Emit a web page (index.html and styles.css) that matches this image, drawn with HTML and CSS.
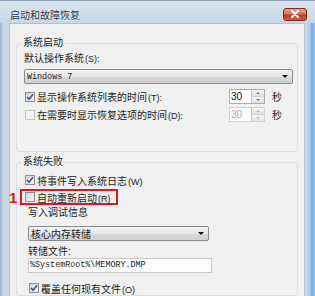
FILE: index.html
```html
<!DOCTYPE html>
<html lang="zh-CN">
<head>
  <meta charset="UTF-8">
  <meta name="viewport" content="width=device-width, initial-scale=1.0">
  <title>启动和故障恢复</title>
  <link rel="stylesheet" href="styles.css">
</head>
<body>
  <div class="window">
    <div class="titlebar">
      <span class="title">启动和故障恢复</span>
      <button class="close-btn">
        <svg width="10" height="8" viewBox="0 0 10 8">
          <path d="M2 1 L8 7 M8 1 L2 7" stroke="#fff" stroke-width="2" stroke-linecap="round"/>
        </svg>
      </button>
    </div>

    <div class="client">
      <fieldset class="group group-start">
        <legend>系统启动</legend>
        <div class="label">默认操作系统<span class="key">(S):</span></div>
        <div class="select">
          <span class="mono">Windows 7</span>
          <span class="arrow"></span>
        </div>
        <div class="row spin-row first">
          <span class="check">
            <svg width="8" height="8" viewBox="0 0 8 8"><path d="M1 4 L3 6.2 L7 1.2" fill="none" stroke="#3d5388" stroke-width="1.6"/></svg>
          </span>
          <span class="text">显示操作系统列表的时间<span class="key">(T):</span></span>
          <div class="spin">
            <span class="value">30</span>
            <span class="spin-btns"><i class="up"></i><i class="down"></i></span>
          </div>
          <span class="unit">秒</span>
        </div>
        <div class="row spin-row">
          <span class="check disabled"></span>
          <span class="text">在需要时显示恢复选项的时间<span class="key">(D):</span></span>
          <div class="spin disabled">
            <span class="value">30</span>
            <span class="spin-btns"><i class="up"></i><i class="down"></i></span>
          </div>
          <span class="unit">秒</span>
        </div>
      </fieldset>

      <fieldset class="group group-fail">
        <legend>系统失败</legend>
        <div class="row">
          <span class="check">
            <svg width="8" height="8" viewBox="0 0 8 8"><path d="M1 4 L3 6.2 L7 1.2" fill="none" stroke="#3d5388" stroke-width="1.6"/></svg>
          </span>
          <span class="text">将事件写入系统日志<span class="key">(W)</span></span>
        </div>
        <div class="row marked">
          <span class="mark-no">1</span>
          <span class="check"></span>
          <span class="text">自动重新启动<span class="key">(R)</span></span>
        </div>
        <div class="debug">
          <div class="label">写入调试信息</div>
          <div class="select short">
            <span>核心内存转储</span>
            <span class="arrow"></span>
          </div>
          <div class="label tight">转储文件:</div>
          <div class="textbox mono">%SystemRoot%\MEMORY.DMP</div>
          <div class="row overwrite">
            <span class="check">
              <svg width="8" height="8" viewBox="0 0 8 8"><path d="M1 4 L3 6.2 L7 1.2" fill="none" stroke="#3d5388" stroke-width="1.6"/></svg>
            </span>
            <span class="text">覆盖任何现有文件<span class="key">(O)</span></span>
          </div>
        </div>
      </fieldset>
    </div>
  </div>
</body>
</html>
```

FILE: styles.css
```css
body {
  margin: 0;
  width: 315px;
  height: 296px;
  overflow: hidden;
  font-family: "Liberation Sans", "Noto Sans CJK SC", sans-serif;
  font-size: 10px;
  color: #222;
}
/* Moldura da janela (estilo Aero) */
.window {
  height: 296px;
  display: flex;
  flex-direction: column;
  border-top: 1px solid #8a9db2;
  box-sizing: border-box;
  overflow: hidden;
  background: linear-gradient(to right, #9fb2c6 0, #c8d6e5 3px, #cdd9e6 calc(100% - 9px), #a9c8e8 calc(100% - 5px), #6faae6 calc(100% - 3px), #9cc4ee 100%);
}
.titlebar {
  height: 23px;
  display: flex;
  align-items: center;
  justify-content: space-between;
  padding: 4px 8px 0 10px;
  box-sizing: border-box;
  background: linear-gradient(#dbe5ef, #c8d6e5);
}
.title {
  font-size: 10px;
  color: #2a3646;
  text-shadow: 0 0 3px #fff;
}
.close-btn {
  width: 24px;
  height: 13px;
  padding: 0;
  border: 1px solid #7a2e24;
  border-radius: 3px;
  background: linear-gradient(#eba08f 0%, #d9715d 45%, #c23a25 55%, #d65a46 100%);
  display: flex;
  align-items: center;
  justify-content: center;
}
.client {
  flex: 1;
  margin: 0 10px 0 9px;
  padding: 12px 6px 0 6px;
  background: #f0f0f0;
  border: 1px solid #b4c2d0;
  border-bottom: none;
}
.group {
  margin: 0;
  padding: 2px 4px 29px 7px;
  border: 1px solid #d5dfe5;
  border-radius: 3px;
  min-width: 0;
}
.group legend {
  padding: 0 2px;
  margin-left: -3px;
  line-height: 14px;
}
.group-fail {
  margin-top: 3px;
  padding-top: 4px;
  padding-bottom: 0;
}
.key {
  font-size: 9px;
  margin-left: 1px;
}
.label {
  line-height: 14px;
}
.label.tight {
  line-height: 13px;
  margin-top: 4px;
}
.mono {
  font-family: "Liberation Mono", monospace;
  font-size: 8.4px;
}
.select {
  margin-top: 3px;
  height: 15px;
  box-sizing: border-box;
  border: 1px solid #8a8a8a;
  border-radius: 2px;
  background: linear-gradient(#f4f4f4, #e6e6e6 50%, #d9d9d9 51%, #cfcfcf);
  display: flex;
  align-items: center;
  justify-content: space-between;
  padding: 0 4px 0 2px;
}
.arrow {
  width: 0;
  height: 0;
  border-left: 3px solid transparent;
  border-right: 3px solid transparent;
  border-top: 3px solid #111;
}
.row {
  display: flex;
  align-items: center;
  height: 14px;
}
.check {
  width: 10px;
  height: 10px;
  box-sizing: border-box;
  margin: 0 2px 0 1px;
  border: 1px solid #8e8f8f;
  background: linear-gradient(135deg, #d0d4da, #f8f8f8);
  display: flex;
  align-items: center;
  justify-content: center;
  flex: none;
}
.check.disabled {
  border-color: #c2c2c2;
  background: #f4f4f4;
}
.spin-row {
  height: 15px;
  margin-top: 3px;
}
.spin-row.first {
  margin-top: 5px;
}
.spin-row .text {
  flex: 1;
}
.spin {
  width: 36px;
  height: 15px;
  box-sizing: border-box;
  border: 1px solid #abadb3;
  background: #fff;
  display: flex;
}
.spin .value {
  flex: 1;
  padding-left: 1px;
  line-height: 13px;
  color: #111;
}
.spin-btns {
  width: 12px;
  display: flex;
  flex-direction: column;
  border-left: 1px solid #c8c8c8;
}
.spin-btns i {
  flex: 1;
  display: flex;
  align-items: center;
  justify-content: center;
  background: linear-gradient(#f6f6f6, #e2e2e2);
}
.spin-btns i + i {
  border-top: 1px solid #d0d0d0;
}
.spin-btns i::after {
  content: "";
  border-left: 2px solid transparent;
  border-right: 2px solid transparent;
}
.spin-btns .up::after {
  border-bottom: 2px solid #777;
}
.spin-btns .down::after {
  border-top: 2px solid #777;
}
.spin.disabled {
  border-color: #d2d2d2;
}
.spin.disabled .value {
  color: #a8a8a8;
}
.spin.disabled .spin-btns i::after {
  border-bottom-color: #bbb;
  border-top-color: #bbb;
}
.unit {
  width: 21px;
  margin-left: 7px;
}
/* Marcação vermelha da opção */
.marked {
  position: relative;
  width: fit-content;
  height: 12px;
  margin: 2px 0 0 -4px;
  padding: 0 5px 0 2px;
  border: 2px solid #e1161e;
}
.mark-no {
  position: absolute;
  left: -13px;
  top: -1px;
  font-size: 15px;
  font-weight: bold;
  color: #e1161e;
  line-height: 15px;
}
.debug {
  margin-left: 4px;
  margin-top: 1px;
}
.select.short {
  width: 181px;
  margin-top: 6px;
}
.textbox {
  width: 184px;
  height: 15px;
  box-sizing: border-box;
  border: 1px solid #c8c8c8;
  background: #fdfdfd;
  padding-left: 1px;
  line-height: 13px;
}
.overwrite {
  margin-top: 8px;
}
.overwrite .check {
  margin-left: 1px;
}
```
